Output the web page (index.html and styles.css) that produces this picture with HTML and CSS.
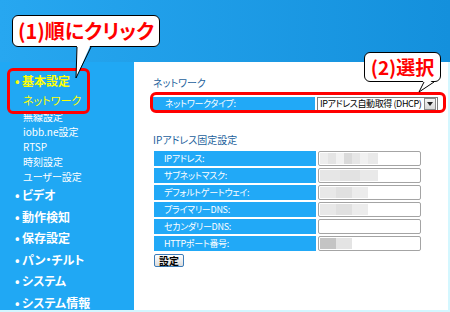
FILE: index.html
```html
<!DOCTYPE html>
<html lang="ja">
<head>
    <meta charset="UTF-8">
    <title>ネットワーク設定</title>
    <link rel="stylesheet" href="styles.css">
</head>
<body>
    <div class="screen">
        <header class="topbar"></header>

        <div class="main">
            <!-- Left menu -->
            <nav class="sidebar">
                <div class="nav-main current">基本設定</div>
                <div class="nav-sub current">ネットワーク</div>
                <div class="nav-sub">無線設定</div>
                <div class="nav-sub">iobb.ne設定</div>
                <div class="nav-sub">RTSP</div>
                <div class="nav-sub">時刻設定</div>
                <div class="nav-sub">ユーザー設定</div>
                <div class="nav-main">ビデオ</div>
                <div class="nav-main">動作検知</div>
                <div class="nav-main">保存設定</div>
                <div class="nav-main">パン・チルト</div>
                <div class="nav-main">システム</div>
                <div class="nav-main">システム情報</div>
            </nav>

            <!-- Settings panel -->
            <section class="panel">
                <h2 class="panel-title">ネットワーク</h2>
                <div class="field-row net-row">
                    <div class="field-label">ネットワークタイプ:</div>
                    <div class="select">
                        <span>IPアドレス自動取得 (DHCP)</span>
                        <span class="select-arrow"></span>
                    </div>
                </div>

                <h2 class="panel-title second">IPアドレス固定設定</h2>
                <div class="field-list">
                    <div class="field-row">
                        <div class="field-label">IPアドレス:</div>
                        <div class="field-input"><span class="redact r-ip"></span></div>
                    </div>
                    <div class="field-row">
                        <div class="field-label">サブネットマスク:</div>
                        <div class="field-input"><span class="redact r-mask"></span></div>
                    </div>
                    <div class="field-row">
                        <div class="field-label">デフォルトゲートウェイ:</div>
                        <div class="field-input"><span class="redact r-gw"></span></div>
                    </div>
                    <div class="field-row">
                        <div class="field-label">プライマリーDNS:</div>
                        <div class="field-input"><span class="redact r-gw"></span></div>
                    </div>
                    <div class="field-row">
                        <div class="field-label">セカンダリーDNS:</div>
                        <div class="field-input"></div>
                    </div>
                    <div class="field-row">
                        <div class="field-label">HTTPポート番号:</div>
                        <div class="field-input"><span class="redact r-port"></span></div>
                    </div>
                </div>
                <button class="save-btn" type="button">設定</button>
            </section>
        </div>

        <!-- Annotations -->
        <div class="highlight hl-menu"></div>
        <div class="highlight hl-type"></div>

        <div class="callout callout-1">
            (1)順にクリック
            <svg class="tail" width="24" height="36" viewBox="0 0 24 36">
                <polygon points="6,0 20,0 5,34" fill="#fff"/>
                <polyline points="6,3 5,34 20,3" fill="none" stroke="#000" stroke-width="1"/>
            </svg>
        </div>
        <div class="callout callout-2">
            (2)選択
            <svg class="tail" width="20" height="16" viewBox="0 0 20 16">
                <polygon points="7,0 17,0 2,13" fill="#fff"/>
                <polyline points="7,3 2,13 17,3" fill="none" stroke="#000" stroke-width="1"/>
            </svg>
        </div>
    </div>
</body>
</html>
```

FILE: styles.css
```css
body {
    margin: 0;
    font-family: "Noto Sans CJK JP", "Noto Sans", sans-serif;
    font-feature-settings: "palt";
}

.screen {
    position: relative;
    width: 450px;
    height: 312px;
    background-color: #d4f7ff; /* light cyan edge */
    overflow: hidden;
}

.topbar {
    height: 62px;
    background: linear-gradient(to right, #27a7f0, #1490dc);
}

.main {
    display: flex;
    height: 248px;
}

/* Left menu */
.sidebar {
    width: 134px;
    background-color: #20a8f4;
    padding: 8px 0 0 15px;
    box-sizing: border-box;
    color: #fff;
}

.nav-main {
    font-size: 12px;
    font-weight: bold;
    line-height: 21.5px;
    height: 21.5px;
    white-space: nowrap;
}

.nav-main::before {
    content: "•";
    display: inline-block;
    width: 7px;
}

.nav-main.current {
    color: #ffff00;
    line-height: 21px;
    height: 21px;
}

.nav-sub {
    font-size: 10px;
    line-height: 15px;
    height: 15px;
    padding-left: 8px;
    white-space: nowrap;
}

.nav-sub.current {
    color: #ffff00;
    font-size: 11px;
    line-height: 18px;
    height: 18px;
}

/* Settings panel */
.panel {
    width: 314px;
    background-color: #fff;
    padding: 14px 0 0 19px;
    box-sizing: border-box;
}

.panel-title {
    margin: 0;
    font-size: 10px;
    font-weight: normal;
    line-height: 14px;
    color: #1d5f9c;
}

.panel-title.second {
    margin-top: 22px;
}

.field-row {
    display: flex;
    gap: 2px;
    height: 15px;
}

.net-row {
    margin-top: 7px;
    height: 14px;
}

.field-list {
    display: flex;
    flex-direction: column;
    gap: 2px;
    margin: 4px 0 0 1px;
}

.field-label {
    width: 162px;
    background-color: #21a9f7;
    color: #fff;
    font-size: 9px;
    line-height: 15px;
    letter-spacing: -0.3px;
    padding-left: 10px;
    box-sizing: border-box;
    white-space: nowrap;
}

.net-row .field-label {
    line-height: 14px;
    padding-left: 12px;
}

.field-input {
    width: 103px;
    height: 15px;
    border: 1px solid #a4a4a4;
    border-radius: 2px;
    box-sizing: border-box;
    padding: 1px;
    display: flex;
    background-color: #fff;
}

.select {
    width: 121px;
    height: 14px;
    border: 1px solid #7c7c7c;
    box-sizing: border-box;
    display: flex;
    align-items: center;
    justify-content: space-between;
    padding-left: 2px;
    font-size: 9px;
    line-height: 12px;
    letter-spacing: -0.4px;
    color: #000;
    white-space: nowrap;
}

.select-arrow {
    flex: none;
    width: 10px;
    height: 10px;
    margin-right: 1px;
    border: 1px solid #8a8a8a;
    background: linear-gradient(#f4f4f4, #d8d8d8);
    position: relative;
}

.select-arrow::after {
    content: "";
    position: absolute;
    left: 2px;
    top: 3px;
    border-left: 3px solid transparent;
    border-right: 3px solid transparent;
    border-top: 4px solid #222;
}

/* blurred values in the inputs */
.redact {
    height: 11px;
    display: block;
}

.r-ip {
    width: 58px;
    background: linear-gradient(to right, #ededed 0 8px, #e4e4e4 8px 16px, #f2f2f2 16px 24px, #dadada 24px 32px, #e6e6e6 32px 40px, #f1f1f1 40px 48px, #e9e9e9 48px);
}

.r-mask {
    width: 58px;
    background: linear-gradient(to right, #e6e6e6 0 20px, #e2e2e2 20px 40px, #e9e9e9 40px);
}

.r-gw {
    width: 48px;
    background: linear-gradient(to right, #e8e8e8 0 16px, #e0e0e0 16px 32px, #ececec 32px);
}

.r-port {
    width: 32px;
    background: linear-gradient(to right, #c4c4c4 0 16px, #e4e4e4 16px);
}

.save-btn {
    display: block;
    margin: 3px 0 0 1px;
    width: 30px;
    height: 13px;
    padding: 0;
    border: 1px solid #3d7cb8;
    border-radius: 2px;
    background: linear-gradient(#ffffff, #dcdcdc);
    font-family: inherit;
    font-size: 10px;
    font-weight: bold;
    line-height: 11px;
    color: #000;
}

/* Annotations */
.highlight {
    position: absolute;
    border: 3px solid #ff0000;
    border-radius: 6px;
    box-sizing: border-box;
}

.hl-menu {
    left: 7px;
    top: 68px;
    width: 83px;
    height: 46px;
}

.hl-type {
    left: 150px;
    top: 92px;
    width: 296px;
    height: 21px;
}

.callout {
    position: absolute;
    background-color: #fff;
    border: 1px solid #000;
    border-radius: 6px;
    box-sizing: border-box;
    color: #ff0000;
    font-weight: bold;
    text-align: center;
    white-space: nowrap;
}

.callout .tail {
    position: absolute;
}

.callout-1 {
    left: 12px;
    top: 15px;
    width: 148px;
    height: 32px;
    font-size: 20px;
    line-height: 30px;
}

.callout-1 .tail {
    left: 58px;
    top: 28px;
}

.callout-2 {
    left: 364px;
    top: 52px;
    width: 77px;
    height: 30px;
    font-size: 19px;
    line-height: 28px;
}

.callout-2 .tail {
    left: 52px;
    top: 26px;
}
```
